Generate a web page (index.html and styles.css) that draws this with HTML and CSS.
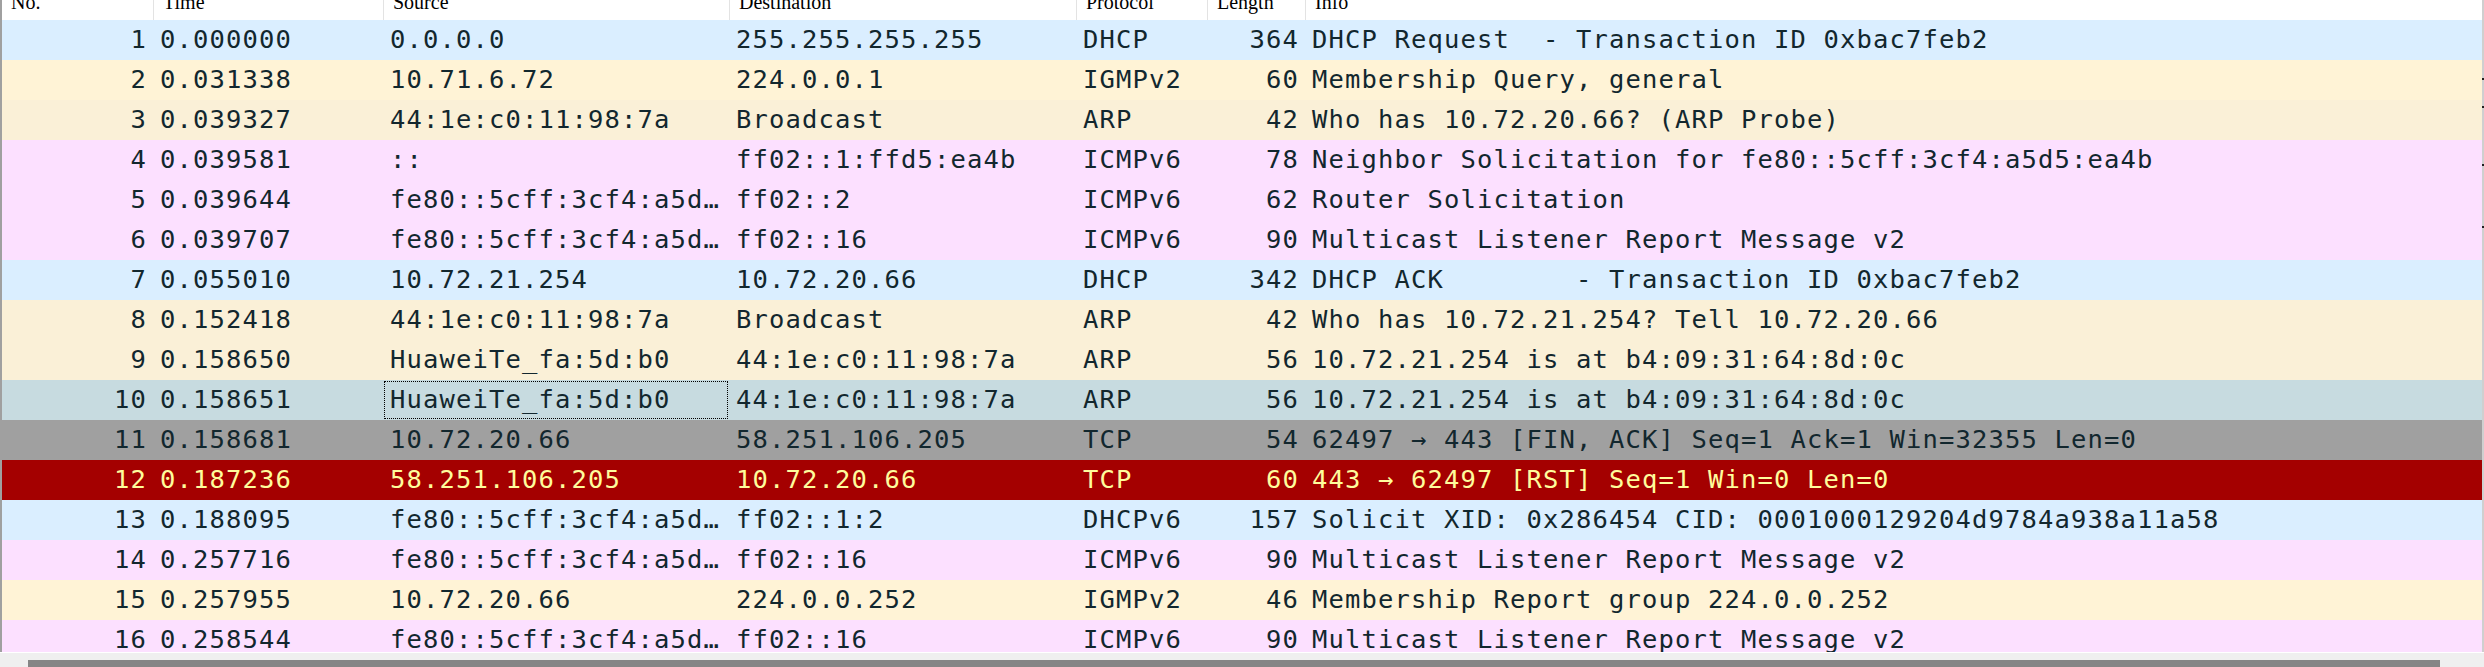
FILE: index.html
```html
<!DOCTYPE html>
<html>
<head>
<meta charset="utf-8">
<link rel="stylesheet" href="styles.css">
</head>
<body>
<div class="pane">
  <div class="view">
    <div class="list">
      <div class="header">
        <div class="hcell first"><span>No.</span></div>
        <div class="hcell"><span>Time</span></div>
        <div class="hcell"><span>Source</span></div>
        <div class="hcell"><span>Destination</span></div>
        <div class="hcell"><span>Protocol</span></div>
        <div class="hcell"><span>Length</span></div>
        <div class="hcell"><span>Info</span></div>
      </div>
      <div class="rows">
        <div class="row udp"><div class="c num">1</div><div class="c">0.000000</div><div class="c">0.0.0.0</div><div class="c">255.255.255.255</div><div class="c">DHCP</div><div class="c num">364</div><div class="c">DHCP Request  - Transaction ID 0xbac7feb2</div></div>
        <div class="row routing"><div class="c num">2</div><div class="c">0.031338</div><div class="c">10.71.6.72</div><div class="c">224.0.0.1</div><div class="c">IGMPv2</div><div class="c num">60</div><div class="c">Membership Query, general</div></div>
        <div class="row arp"><div class="c num">3</div><div class="c">0.039327</div><div class="c">44:1e:c0:11:98:7a</div><div class="c">Broadcast</div><div class="c">ARP</div><div class="c num">42</div><div class="c">Who has 10.72.20.66? (ARP Probe)</div></div>
        <div class="row icmp"><div class="c num">4</div><div class="c">0.039581</div><div class="c">::</div><div class="c">ff02::1:ffd5:ea4b</div><div class="c">ICMPv6</div><div class="c num">78</div><div class="c">Neighbor Solicitation for fe80::5cff:3cf4:a5d5:ea4b</div></div>
        <div class="row icmp"><div class="c num">5</div><div class="c">0.039644</div><div class="c">fe80::5cff:3cf4:a5d…</div><div class="c">ff02::2</div><div class="c">ICMPv6</div><div class="c num">62</div><div class="c">Router Solicitation</div></div>
        <div class="row icmp"><div class="c num">6</div><div class="c">0.039707</div><div class="c">fe80::5cff:3cf4:a5d…</div><div class="c">ff02::16</div><div class="c">ICMPv6</div><div class="c num">90</div><div class="c">Multicast Listener Report Message v2</div></div>
        <div class="row udp"><div class="c num">7</div><div class="c">0.055010</div><div class="c">10.72.21.254</div><div class="c">10.72.20.66</div><div class="c">DHCP</div><div class="c num">342</div><div class="c">DHCP ACK        - Transaction ID 0xbac7feb2</div></div>
        <div class="row arp"><div class="c num">8</div><div class="c">0.152418</div><div class="c">44:1e:c0:11:98:7a</div><div class="c">Broadcast</div><div class="c">ARP</div><div class="c num">42</div><div class="c">Who has 10.72.21.254? Tell 10.72.20.66</div></div>
        <div class="row arp"><div class="c num">9</div><div class="c">0.158650</div><div class="c">HuaweiTe_fa:5d:b0</div><div class="c">44:1e:c0:11:98:7a</div><div class="c">ARP</div><div class="c num">56</div><div class="c">10.72.21.254 is at b4:09:31:64:8d:0c</div></div>
        <div class="row selected"><div class="c num">10</div><div class="c">0.158651</div><div class="c focus">HuaweiTe_fa:5d:b0</div><div class="c">44:1e:c0:11:98:7a</div><div class="c">ARP</div><div class="c num">56</div><div class="c">10.72.21.254 is at b4:09:31:64:8d:0c</div></div>
        <div class="row tcpflag"><div class="c num">11</div><div class="c">0.158681</div><div class="c">10.72.20.66</div><div class="c">58.251.106.205</div><div class="c">TCP</div><div class="c num">54</div><div class="c">62497 → 443 [FIN, ACK] Seq=1 Ack=1 Win=32355 Len=0</div></div>
        <div class="row tcprst"><div class="c num">12</div><div class="c">0.187236</div><div class="c">58.251.106.205</div><div class="c">10.72.20.66</div><div class="c">TCP</div><div class="c num">60</div><div class="c">443 → 62497 [RST] Seq=1 Win=0 Len=0</div></div>
        <div class="row udp"><div class="c num">13</div><div class="c">0.188095</div><div class="c">fe80::5cff:3cf4:a5d…</div><div class="c">ff02::1:2</div><div class="c">DHCPv6</div><div class="c num">157</div><div class="c">Solicit XID: 0x286454 CID: 0001000129204d9784a938a11a58</div></div>
        <div class="row icmp"><div class="c num">14</div><div class="c">0.257716</div><div class="c">fe80::5cff:3cf4:a5d…</div><div class="c">ff02::16</div><div class="c">ICMPv6</div><div class="c num">90</div><div class="c">Multicast Listener Report Message v2</div></div>
        <div class="row routing"><div class="c num">15</div><div class="c">0.257955</div><div class="c">10.72.20.66</div><div class="c">224.0.0.252</div><div class="c">IGMPv2</div><div class="c num">46</div><div class="c">Membership Report group 224.0.0.252</div></div>
        <div class="row icmp"><div class="c num">16</div><div class="c">0.258544</div><div class="c">fe80::5cff:3cf4:a5d…</div><div class="c">ff02::16</div><div class="c">ICMPv6</div><div class="c num">90</div><div class="c">Multicast Listener Report Message v2</div></div>
      </div>
    </div>
    <div class="vscroll">
      <div class="mark m1"></div>
      <div class="mark m2"></div>
      <div class="mark m3"></div>
      <div class="mark m4"></div>
    </div>
  </div>
  <div class="hscroll"><div class="thumb"></div></div>
</div>
</body>
</html>
```

FILE: styles.css
```css
html, body {
  margin: 0;
  padding: 0;
  background: #ffffff;
}
body {
  width: 2484px;
  height: 667px;
  overflow: hidden;
}
.pane {
  display: flex;
  flex-direction: column;
  width: 2484px;
  height: 667px;
}
.view {
  display: flex;
  height: 652px;
}
.list {
  flex: 1;
  min-width: 0;
  border-left: 2px solid #a0a0a0;
  overflow: hidden;
}
.header,
.row {
  display: grid;
  grid-template-columns: 151px 230px 346px 347px 131px 98px 1fr;
}
.header {
  height: 20px;
  overflow: hidden;
  background: #ffffff;
}
.hcell {
  height: 20px;
  border-left: 1px solid #e3e3e3;
  padding-left: 9px;
  font-family: "Liberation Serif", serif;
  font-size: 20px;
  color: #000000;
  overflow: hidden;
}
.hcell.first {
  border-left: none;
}
.hcell span {
  display: block;
  line-height: 4px;
  white-space: pre;
}
.row {
  height: 40px;
  font-family: "DejaVu Sans Mono", monospace;
  font-size: 25.5px;
  letter-spacing: 1.15px;
  color: #12272e;
}
.c {
  padding: 0 7px;
  line-height: 38px;
  white-space: pre;
  overflow: hidden;
}
.c.num {
  text-align: right;
  padding-right: 6px;
}
.udp { background: #daeeff; }
.routing { background: #fff3d6; }
.arp { background: #faf0d7; }
.icmp { background: #fce0ff; }
.selected { background: #c7dbe0; }
.tcpflag { background: #a0a0a0; }
.tcprst { background: #a40000; color: #fffc9c; }
.focus {
  outline: 1px dotted #000000;
  outline-offset: -2px;
}
.vscroll {
  width: 2px;
  background: #cfcfcf;
  display: flex;
  flex-direction: column;
}
.mark {
  height: 2px;
  background: #202020;
}
.m1 { margin-top: 78px; }
.m2 { margin-top: 26px; }
.m3 { margin-top: 56px; }
.m4 { margin-top: 60px; }
.hscroll {
  height: 15px;
  background: #efefef;
  border-top: 1px solid #ffffff;
  padding: 7px 44px 0 28px;
  box-sizing: border-box;
}
.thumb {
  height: 8px;
  background: #858585;
}
```
